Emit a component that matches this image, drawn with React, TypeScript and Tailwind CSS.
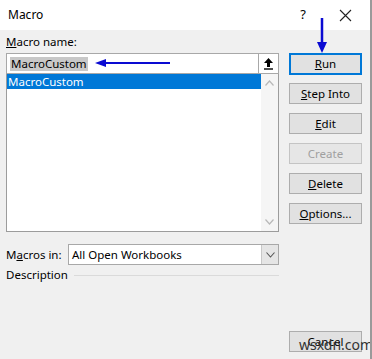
import React from "react";

const font = { fontFamily: '"Noto Sans", "Segoe UI", sans-serif' };

function DlgButton({
  children,
  primary,
  disabled,
  className = "",
}: {
  children: React.ReactNode;
  primary?: boolean;
  disabled?: boolean;
  className?: string;
}) {
  return (
    <div
      className={
        "flex h-[21px] w-[73px] items-center justify-center text-[11.5px] leading-none " +
        (primary
          ? "h-[22px] border-2 border-[#0078d7] bg-[#e1e1e1] text-black "
          : disabled
          ? "border border-[#c4c4c4] bg-[#e6e6e6] text-[#a0a0a0] "
          : "border border-[#adadad] bg-[#e1e1e1] text-black ") +
        className
      }
    >
      {children}
    </div>
  );
}

function Chevron({ up }: { up?: boolean }) {
  return (
    <svg width="9" height="6" viewBox="0 0 9 6">
      <path
        d={up ? "M0.5 5.5 L4.5 1 L8.5 5.5" : "M0.5 0.5 L4.5 5 L8.5 0.5"}
        fill="none"
        stroke="#b8b8b8"
        strokeWidth="1.2"
      />
    </svg>
  );
}

export default function App() {
  return (
    <div
      className="relative h-[359px] w-[372px] overflow-hidden border-r-2 border-[#9a9a9a] bg-[#f0f0f0] text-black"
      style={font}
    >
      {/* title bar */}
      <div className="flex h-[30px] items-center bg-white pl-[8px] pr-[18px] text-[12px]">
        <span>Macro</span>
        <span className="ml-auto mr-[33px] text-[13px]">?</span>
        <svg width="13" height="13" viewBox="0 0 13 13">
          <path d="M1 1 L12 12 M12 1 L1 12" stroke="#222" strokeWidth="1.1" />
        </svg>
      </div>

      <div className="flex pl-[6px]">
        {/* left column */}
        <div className="flex w-[273px] flex-col text-[11.5px]">
          <div className="flex h-[23px] items-center pt-[1px]">
            <span>
              <u>M</u>acro name:
            </span>
          </div>

          {/* name input */}
          <div className="flex h-[21px] items-center border border-[#a8a8a8] bg-white">
            <span className="ml-[3px] bg-[#c8c8c8] px-[1px] leading-[14px]">
              MacroCustom
            </span>
            <div className="ml-auto flex h-full w-[20px] items-center justify-center border-l border-[#a8a8a8]">
              <svg width="11" height="13" viewBox="0 0 11 13">
                <path d="M5.5 1 L10 6 L7 6 L7 10 L4 10 L4 6 L1 6 Z" fill="#000" />
                <rect x="1" y="11.3" width="9" height="1.4" fill="#000" />
              </svg>
            </div>
          </div>

          {/* macro list */}
          <div className="flex h-[158px] border border-t-0 border-[#9c9c9c] bg-white">
            <div className="flex-1">
              <div className="flex h-[15px] items-center bg-[#0078d7] pl-[1px] text-white">
                MacroCustom
              </div>
            </div>
            <div className="flex w-[17px] flex-col items-center justify-between bg-[#f5f5f5] py-[6px]">
              <Chevron up />
              <Chevron />
            </div>
          </div>

          {/* macros in */}
          <div className="mt-[12px] flex items-center">
            <span className="w-[62px]">
              M<u>a</u>cros in:
            </span>
            <div className="flex h-[21px] flex-1 items-center border border-[#a8a8a8] bg-white">
              <span className="ml-[3px]">All Open Workbooks</span>
              <div className="ml-auto flex h-full w-[17px] items-center justify-center border-l border-[#c8c8c8] bg-[#e5e5e5]">
                <svg width="9" height="6" viewBox="0 0 9 6">
                  <path d="M0.5 0.5 L4.5 5 L8.5 0.5" fill="none" stroke="#555" strokeWidth="1.1" />
                </svg>
              </div>
            </div>
          </div>

          <div className="mt-[2px] flex h-[16px] items-center">
            <span>Description</span>
            <div className="ml-[6px] h-px flex-1 bg-[#dadada]" />
          </div>
        </div>

        {/* right column */}
        <div className="ml-[10px] flex flex-col pt-[23px]">
          <DlgButton primary>
            <span>
              <u>R</u>un
            </span>
          </DlgButton>
          <DlgButton className="mt-[8px]">
            <span>
              <u>S</u>tep Into
            </span>
          </DlgButton>
          <DlgButton className="mt-[9px]">
            <span>
              <u>E</u>dit
            </span>
          </DlgButton>
          <DlgButton disabled className="mt-[9px]">
            Create
          </DlgButton>
          <DlgButton className="mt-[9px]">
            <span>
              <u>D</u>elete
            </span>
          </DlgButton>
          <DlgButton className="mt-[9px]">
            <span>
              <u>O</u>ptions...
            </span>
          </DlgButton>
          <DlgButton className="mt-[107px]">Cancel</DlgButton>
        </div>
      </div>

      {/* annotation arrows */}
      <svg className="absolute left-0 top-0" width="372" height="359">
        <line x1="322" y1="18" x2="322" y2="44" stroke="#0a0ad2" strokeWidth="2.5" />
        <path d="M317 42 L327 42 L322 53 Z" fill="#0a0ad2" />
        <line x1="170" y1="63" x2="104" y2="63" stroke="#0a0ad2" strokeWidth="2" />
        <path d="M95 63 L106 59 L106 67 Z" fill="#0a0ad2" />
      </svg>

      <span className="absolute left-[299px] top-[338px] text-[14px] leading-none text-[#333]">
        wsxdn.com
      </span>
    </div>
  );
}
